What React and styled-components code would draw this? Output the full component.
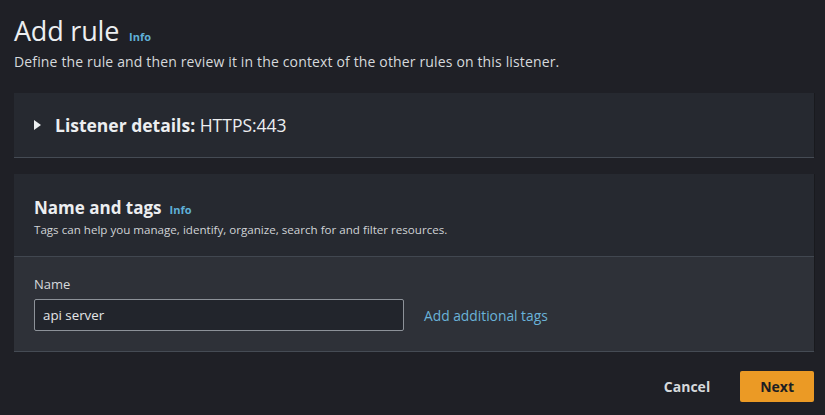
import React, {useState} from "react";
import styled, {createGlobalStyle} from "styled-components";

const GlobalStyle = createGlobalStyle`
    html, body {
        margin: 0;
        padding: 0;
        background: #1f2026;
    }
    body {
        font-family: "Open Sans", "Noto Sans", sans-serif;
        color: #e9ebed;
    }
`

const Page = styled.div`
    width: 825px;
    height: 415px;
    box-sizing: border-box;
    padding: 14px 11px 0 14px;
    background: #1f2026;
    overflow: hidden;
`

const Header = styled.div`
    margin-bottom: 21px;
`

const TitleRow = styled.div`
    display: flex;
    align-items: baseline;
    gap: 10px;
    height: 38px;
`

const Title = styled.h1`
    margin: 0;
    font-size: 27px;
    font-weight: 400;
    letter-spacing: -0.2px;
    color: #eceef0;
    line-height: 34px;
`

const Info = styled.a`
    font-size: 11px;
    font-weight: 700;
    color: #5fb0d8;
    text-decoration: none;
`

const Subtitle = styled.p`
    margin: 0;
    font-size: 14px;
    letter-spacing: 0.15px;
    color: #d6d9dc;
    line-height: 20px;
`

const Card = styled.section`
    background: #262930;
    box-shadow: 0 1px 0 #454b54, 1px 0 0 #191a1e;
    margin-bottom: ${(p) => p.gap || 0}px;
`

const Toggle = styled.button`
    display: flex;
    align-items: center;
    gap: 14px;
    width: 100%;
    height: 64px;
    padding: 0 20px;
    border: none;
    background: none;
    color: #eceef0;
    font-family: inherit;
    font-size: 17.5px;
    cursor: pointer;
    text-align: left;
`

const Caret = styled.span`
    width: 0;
    height: 0;
    border-top: 5px solid transparent;
    border-bottom: 5px solid transparent;
    border-left: 7px solid #eceef0;
    transform: ${(p) => (p.open ? "rotate(90deg)" : "none")};
`

const Strong = styled.strong`
    font-weight: 700;
`

const CardHeader = styled.div`
    padding: 22px 20px 18px;
    border-bottom: 1px solid #414750;
`

const HeadingRow = styled.div`
    display: flex;
    align-items: baseline;
    gap: 8px;
`

const Heading = styled.h2`
    margin: 0;
    font-size: 17px;
    font-weight: 700;
    line-height: 24px;
    color: #eceef0;
`

const Description = styled.p`
    margin: 2px 0 0;
    font-size: 11.6px;
    color: #d0d3d6;
    line-height: 16px;
`

const CardBody = styled.div`
    background: #2e3138;
    padding: 18px 20px 20px;
`

const Label = styled.label`
    display: block;
    font-size: 13px;
    line-height: 18px;
    color: #d6d9dc;
    margin-bottom: 6px;
`

const Row = styled.div`
    display: flex;
    align-items: center;
    gap: 20px;
`

const Input = styled.input`
    width: 370px;
    height: 32px;
    box-sizing: border-box;
    padding: 0 8px;
    background: #22252c;
    border: 1px solid #8d9299;
    border-radius: 2px;
    color: #e4e6e8;
    font-family: inherit;
    font-size: 13.3px;
    outline: none;
`

const Link = styled.a`
    font-size: 13.8px;
    color: #6ab3d8;
    text-decoration: none;
    cursor: pointer;
`

const Actions = styled.div`
    display: flex;
    justify-content: flex-end;
    align-items: center;
    gap: 8px;
    padding-top: 20px;
`

const Button = styled.button`
    height: 31px;
    padding: 0 ${(p) => (p.primary ? 20 : 22)}px;
    border: none;
    border-radius: 2px;
    background: ${(p) => (p.primary ? "#eb9a25" : "transparent")};
    color: ${(p) => (p.primary ? "#1c1e23" : "#d6d9dc")};
    font-family: inherit;
    font-size: 14px;
    font-weight: 700;
    cursor: pointer;
`

const App = () => {
    const [open, setOpen] = useState(false);
    const [name, setName] = useState("api server");

    return (
        <>
            <GlobalStyle />
            <Page>
                <Header>
                    <TitleRow>
                        <Title>Add rule</Title>
                        <Info>Info</Info>
                    </TitleRow>
                    <Subtitle>Define the rule and then review it in the context of the other rules on this listener.</Subtitle>
                </Header>

                <Card gap={17}>
                    <Toggle onClick={() => setOpen(!open)}>
                        <Caret open={open} />
                        <span><Strong>Listener details:</Strong> HTTPS:443</span>
                    </Toggle>
                </Card>

                <Card>
                    <CardHeader>
                        <HeadingRow>
                            <Heading>Name and tags</Heading>
                            <Info>Info</Info>
                        </HeadingRow>
                        <Description>Tags can help you manage, identify, organize, search for and filter resources.</Description>
                    </CardHeader>
                    <CardBody>
                        <Label htmlFor="rule-name">Name</Label>
                        <Row>
                            <Input id="rule-name" value={name} onChange={(e) => setName(e.target.value)} />
                            <Link>Add additional tags</Link>
                        </Row>
                    </CardBody>
                </Card>

                <Actions>
                    <Button>Cancel</Button>
                    <Button primary>Next</Button>
                </Actions>
            </Page>
        </>
    )
}

export default App;
